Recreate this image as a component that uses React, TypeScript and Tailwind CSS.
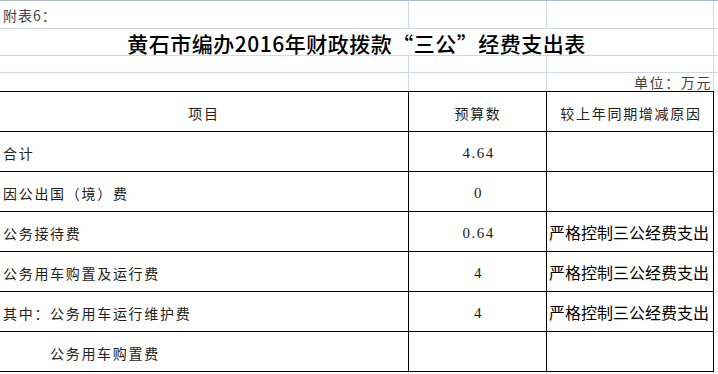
import React from "react";

const cjk = { fontFamily: '"Noto Sans CJK SC", "Noto Sans", sans-serif' };
const num = { fontFamily: '"Liberation Serif", "Noto Sans CJK SC", serif' };

type Row = { name: string; indent?: boolean; value: string; reason: string };

const rows: Row[] = [
  { name: "合计", value: "4.64", reason: "" },
  { name: "因公出国（境）费", value: "0", reason: "" },
  { name: "公务接待费", value: "0.64", reason: "严格控制三公经费支出" },
  { name: "公务用车购置及运行费", value: "4", reason: "严格控制三公经费支出" },
  { name: "其中：公务用车运行维护费", value: "4", reason: "严格控制三公经费支出" },
  { name: "公务用车购置费", indent: true, value: "", reason: "" },
];

function GridRow({ h, children }: { h: string; children?: React.ReactNode }) {
  return <div className={`flex ${h}`}>{children}</div>;
}

export default function App() {
  return (
    <div
      className="w-[718px] h-[374px] bg-white overflow-hidden border-t border-[#abbbd0] text-[#222]"
      style={cjk}
    >
      {/* Row 1: 附表6 */}
      <GridRow h="h-[28px]">
        <div className="w-[409px] border-r border-b border-[#d0d7e5] pl-[3px] pt-[5px] text-[14px] leading-[18px] tracking-[1px] text-[#444]">
          附表6：
        </div>
        <div className="w-[138px] border-r border-b border-[#d0d7e5]" />
        <div className="w-[167px] border-r border-b border-[#d0d7e5]" />
        <div className="flex-1 border-b border-[#d0d7e5]" />
      </GridRow>
      {/* Row 2: title */}
      <GridRow h="h-[27px]">
        <div className="w-[714px] border-r border-b border-[#d0d7e5] flex items-center justify-center pt-[1px] text-[21px] leading-[24px] tracking-[0.5px] font-medium text-black">
          黄石市编办2016年财政拨款“三公”经费支出表
        </div>
        <div className="flex-1 border-b border-[#d0d7e5]" />
      </GridRow>
      {/* Row 3: empty */}
      <GridRow h="h-[17px]">
        <div className="w-[409px] border-r border-b border-[#d0d7e5]" />
        <div className="w-[138px] border-r border-b border-[#d0d7e5]" />
        <div className="w-[167px] border-r border-b border-[#d0d7e5]" />
        <div className="flex-1 border-b border-[#d0d7e5]" />
      </GridRow>
      {/* Row 4: unit */}
      <GridRow h="h-[18px]">
        <div className="w-[409px] border-r border-[#d0d7e5]" />
        <div className="w-[138px] border-r border-[#d0d7e5]" />
        <div className="w-[167px] border-r border-[#d0d7e5] flex items-start justify-end pr-[1px] pt-[1px] text-[14px] leading-[16px] tracking-[1.6px] text-[#444] whitespace-nowrap">
          单位：万元
        </div>
        <div className="flex-1" />
      </GridRow>

      {/* Table */}
      <div className="flex h-[41px]">
        <div className="w-[714px] flex border-t border-b border-black">
          <div className="w-[409px] border-r border-black flex items-center justify-center pt-[4px] text-[14px] tracking-[1.7px]">
            项目
          </div>
          <div className="w-[138px] border-r border-black flex items-center justify-center pt-[4px] pl-[1px] text-[14px] tracking-[1.7px]">
            预算数
          </div>
          <div className="w-[167px] border-r border-black flex items-center justify-center pt-[4px] pl-[2px] text-[14px] tracking-[1.7px] whitespace-nowrap">
            较上年同期增减原因
          </div>
        </div>
        <div className="flex-1 border-t border-b border-[#d0d7e5]" />
      </div>
      {rows.map((r, i) => (
        <div key={i} className="flex h-[40px]">
          <div className="w-[714px] flex border-b border-black">
            <div
              className={`w-[409px] border-r border-black flex items-center pt-[4px] text-[14px] tracking-[1.7px] whitespace-nowrap ${
                r.indent ? "pl-[50px]" : "pl-[3px]"
              }`}
            >
              {r.name}
            </div>
            <div
              className="w-[138px] border-r border-black flex items-center justify-center pt-[4px] pl-[2px] text-[15px] tracking-[1.5px] text-[#222]"
              style={num}
            >
              {r.value}
            </div>
            <div className="w-[167px] border-r border-black flex items-center pl-[2px] text-[16px] text-black whitespace-nowrap">
              {r.reason}
            </div>
          </div>
          <div className="flex-1 border-b border-[#d0d7e5]" />
        </div>
      ))}
      <div className="flex h-[4px]">
        <div className="w-[409px] border-r border-[#d0d7e5]" />
        <div className="w-[138px] border-r border-[#d0d7e5]" />
        <div className="w-[167px] border-r border-[#d0d7e5]" />
      </div>
    </div>
  );
}
